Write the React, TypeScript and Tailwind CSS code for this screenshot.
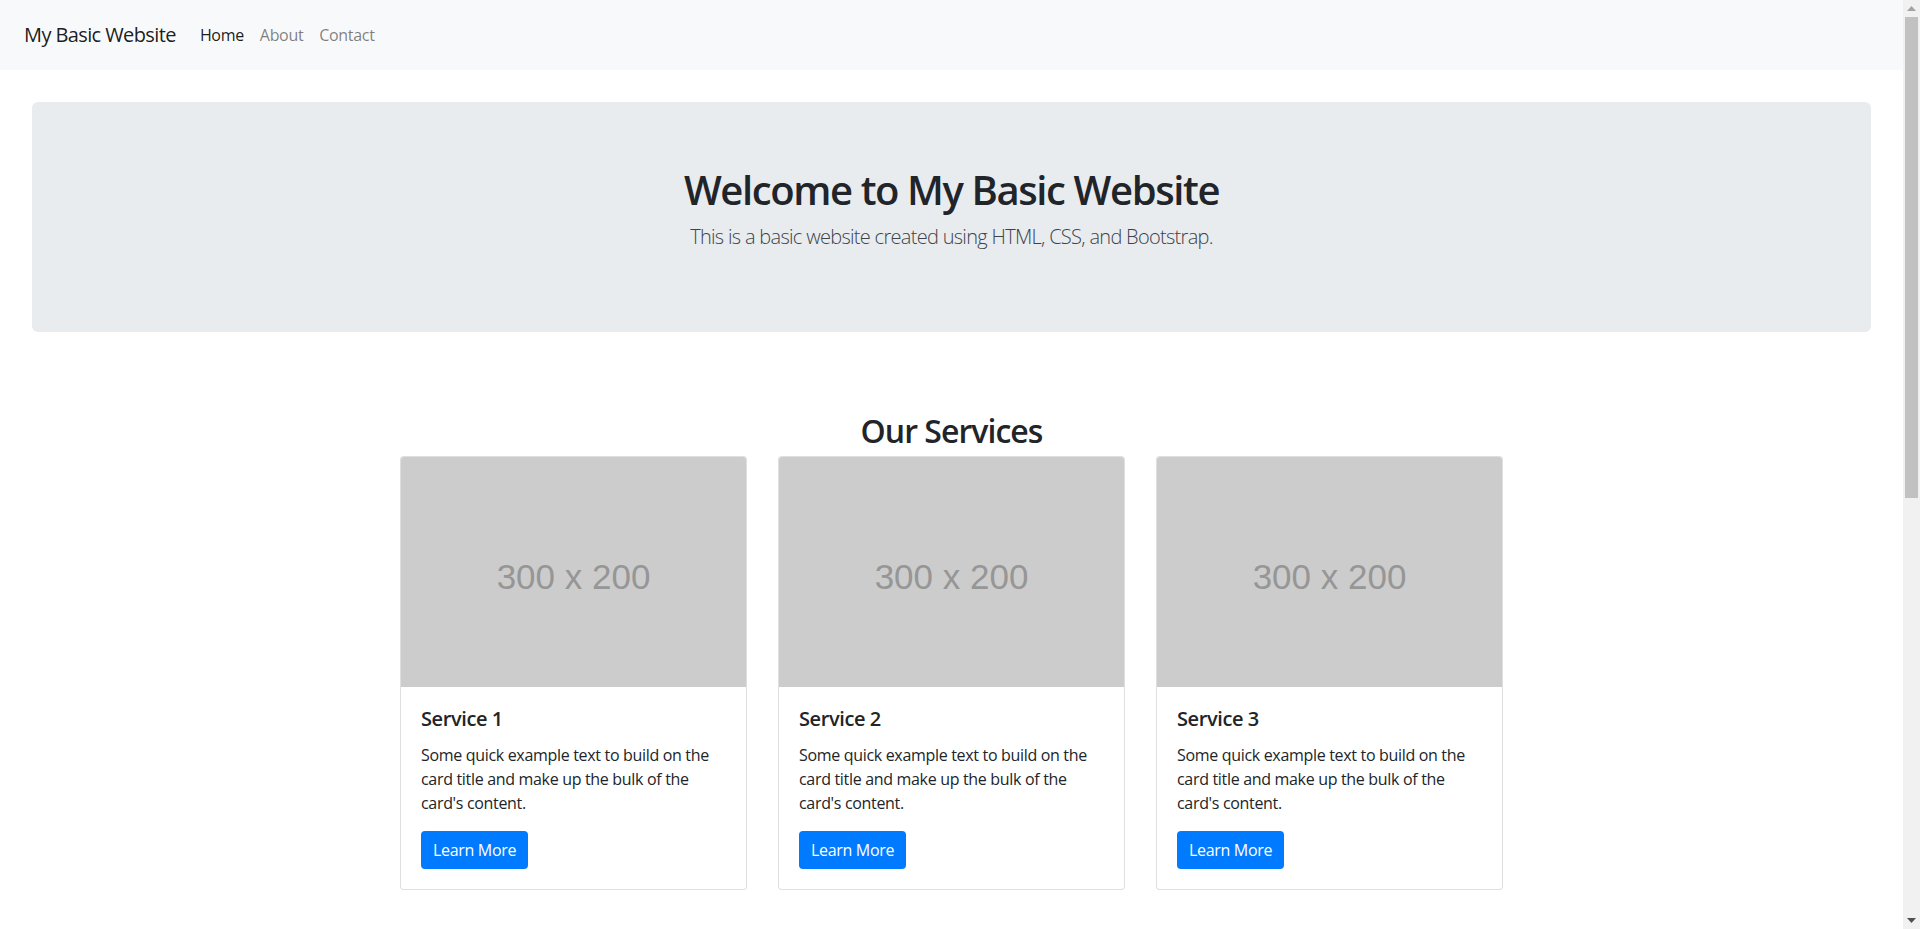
const services = [
  { title: 'Service 1' },
  { title: 'Service 2' },
  { title: 'Service 3' },
];

function Navbar() {
  return (
    <nav className="h-[70px] bg-[#f8f9fa] flex items-center pl-6">
      <a href="#" className="text-[20px] leading-[30px] tracking-[-0.03em] text-[rgba(0,0,0,0.9)] mr-4">
        My Basic Website
      </a>
      <ul className="flex">
        <li>
          <a href="#" className="block px-2 text-[rgba(0,0,0,0.9)]">Home</a>
        </li>
        <li>
          <a href="#" className="block px-2 text-[rgba(0,0,0,0.5)]">About</a>
        </li>
        <li>
          <a href="#" className="block px-2 text-[rgba(0,0,0,0.5)]">Contact</a>
        </li>
      </ul>
    </nav>
  );
}

function ServiceCard({ title }: { title: string }) {
  return (
    <div className="bg-white border border-[rgba(0,0,0,0.125)] rounded overflow-hidden flex flex-col">
      <div className="h-[230px] bg-[#cccccc] flex items-center justify-center pt-[10px]">
        <span className="text-[35px] tracking-normal text-[#969696] font-['Liberation_Sans',Arial,sans-serif]">300 x 200</span>
      </div>
      <div className="p-5">
        <h5 className="text-[20px] leading-6 font-semibold tracking-[-0.02em] mb-3 text-[#212529]">{title}</h5>
        <p className="mb-4 leading-6 text-[#212529]">
          Some quick example text to build on the card title and make up the bulk of the card's content.
        </p>
        <a href="#" className="inline-block bg-[#007bff] text-white rounded px-3 py-1.5 leading-[26px]">
          Learn More
        </a>
      </div>
    </div>
  );
}

function Scrollbar() {
  return (
    <div className="w-[17px] h-screen bg-[#f1f1f1] flex flex-col items-stretch shrink-0">
      <div className="h-[17px] flex items-center justify-center">
        <svg width="9" height="5" viewBox="0 0 9 5">
          <path d="M0 5 L4.5 0 L9 5 Z" fill="#a3a3a3" />
        </svg>
      </div>
      <div className="h-[481px] mx-[2px] bg-[#c1c1c1]" />
      <div className="flex-1" />
      <div className="h-[17px] flex items-center justify-center">
        <svg width="9" height="5" viewBox="0 0 9 5">
          <path d="M0 0 L9 0 L4.5 5 Z" fill="#505050" />
        </svg>
      </div>
    </div>
  );
}

export default function App() {
  return (
    <div className="h-screen flex overflow-hidden bg-white font-['Open_Sans','Noto_Sans',sans-serif] text-base tracking-[-0.02em] text-[#212529]">
      <main className="flex-1 min-w-0">
        <Navbar />
        <div className="mx-8 mt-8 bg-[#e9ecef] rounded-md px-8 py-16 text-center">
          <h1 className="text-[40px] leading-[48px] font-semibold tracking-[-0.035em] mb-2">Welcome to My Basic Website</h1>
          <p className="text-[20px] leading-[30px] font-light tracking-[-0.035em] text-[#3d4349] mb-4">
            This is a basic website created using HTML, CSS, and Bootstrap.
          </p>
        </div>
        <section className="pt-20 flex flex-col items-center">
          <h2 className="text-[32px] leading-[38px] font-semibold tracking-[-0.03em] mb-1.5">Our Services</h2>
          <div className="w-[1103px] grid grid-cols-3 gap-[31px]">
            {services.map((s) => (
              <ServiceCard key={s.title} title={s.title} />
            ))}
          </div>
        </section>
      </main>
      <Scrollbar />
    </div>
  );
}
